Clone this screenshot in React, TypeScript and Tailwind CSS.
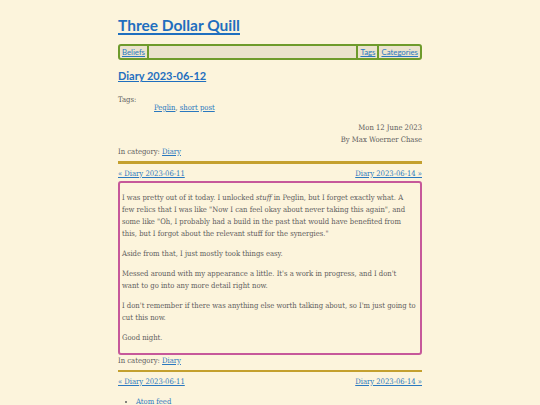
const serif = "font-['DejaVu_Serif_Condensed','DejaVu_Serif',serif]";
const sans = "font-['Lato','Open_Sans',sans-serif]";
const link = "text-[#2a78bf] underline decoration-[1px] underline-offset-[1px]";

function PostNav() {
  return (
    <div className="flex justify-between leading-[12px]">
      <a href="#" className={link}>
        « Diary 2023-06-11
      </a>
      <a href="#" className={link}>
        Diary 2023-06-14 »
      </a>
    </div>
  );
}

function Category() {
  return (
    <div className="leading-[12px]">
      In category:{" "}
      <a href="#" className={link}>
        Diary
      </a>
    </div>
  );
}

export default function App() {
  return (
    <div className={`min-h-screen bg-[#fcf4dc] text-[7.6px] text-[#5c5c5c] ${serif}`}>
      <div className="mx-auto w-[304px] pt-[15px] pb-4">
        <h1 className={`${sans} text-[15.5px] font-bold leading-[20px]`}>
          <a href="#" className="text-[#1f6fbf] underline decoration-[1.5px] underline-offset-[2px]">
            Three Dollar Quill
          </a>
        </h1>

        <nav
          className={`${sans} mt-[9px] flex h-[16px] items-stretch rounded-[3px] border-2 border-[#6e9b2c] bg-[#ebe3cd] text-[7.8px] leading-[12px]`}>
          <div className="flex items-center border-r-2 border-[#6e9b2c] px-[2px]">
            <a href="#" className={link}>
              Beliefs
            </a>
          </div>
          <div className="flex-1" />
          <div className="flex items-center border-l-2 border-[#6e9b2c] px-[2px]">
            <a href="#" className={link}>
              Tags
            </a>
          </div>
          <div className="flex items-center border-l-2 border-[#6e9b2c] px-[2px]">
            <a href="#" className={link}>
              Categories
            </a>
          </div>
        </nav>

        <h2 className={`${sans} mt-[8px] text-[11px] font-bold leading-[16px]`}>
          <a href="#" className="text-[#1f6fbf] underline decoration-[1px] underline-offset-[1px]">
            Diary 2023-06-12
          </a>
        </h2>

        <div className="mt-[10px] leading-[12px]">Tags:</div>
        <ul className="-mt-[4px] pl-[36px] leading-[12px]">
          <li>
            <a href="#" className={link}>
              Peglin
            </a>
            ,{" "}
            <a href="#" className={link}>
              short post
            </a>
          </li>
        </ul>

        <div className="mt-[8px] text-right leading-[12px]">
          <div>Mon 12 June 2023</div>
          <div>By Max Woerner Chase</div>
        </div>
        <Category />

        <div className="mt-[3px] h-[2.5px] bg-[#c4a02e]" />
        <div className="mt-[4px]">
          <PostNav />
        </div>

        <div className="mt-[1px] rounded-[3px] border-2 border-[#c6589a] py-[1px] pr-[4px] pl-[2px] leading-[12px]">
          <p className="my-[8px]">
            I was pretty out of it today. I unlocked <em>stuff</em> in Peglin, but I forget exactly what. A
            few relics that I was like "Now I can feel okay about never taking this again", and some like
            "Oh, I probably had a build in the past that would have benefited from this, but I forgot about
            the relevant stuff for the synergies."
          </p>
          <p className="my-[8px]">Aside from that, I just mostly took things easy.</p>
          <p className="my-[8px]">
            Messed around with my appearance a little. It's a work in progress, and I don't
            <br />
            want to go into any more detail right now.
          </p>
          <p className="my-[8px]">
            I don't remember if there was anything else worth talking about, so I'm just going to cut this
            now.
          </p>
          <p className="my-[8px]">Good night.</p>
        </div>

        <Category />
        <div className="mt-[3px] h-[2.5px] bg-[#c4a02e]" />
        <div className="mt-[4px]">
          <PostNav />
        </div>

        <ul className="mt-[8px] list-disc pl-[18px] leading-[12px] marker:text-[#5c5c5c]">
          <li>
            <a href="#" className={link}>
              Atom feed
            </a>
          </li>
        </ul>
      </div>
    </div>
  );
}
